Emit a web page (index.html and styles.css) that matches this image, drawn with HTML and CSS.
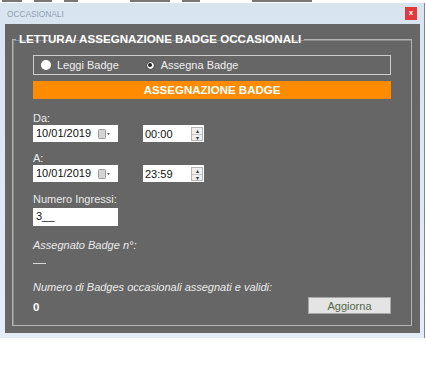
FILE: index.html
```html
<!DOCTYPE html>
<html lang="it">
<head>
    <meta charset="UTF-8">
    <meta name="viewport" content="width=device-width, initial-scale=1.0">
    <title>Occasionali</title>
    <link rel="stylesheet" href="styles.css">
</head>
<body>
    <!-- bordo della finestra sottostante -->
    <div class="topstrip">
        <span class="frag w20"></span>
        <span class="frag w18"></span>
        <span class="frag w14"></span>
        <span class="frag w40 gap"></span>
        <span class="frag w18"></span>
        <span class="frag w60 gap"></span>
    </div>

    <div class="window">
        <!-- barra del titolo -->
        <div class="titlebar">
            <span class="title">OCCASIONALI</span>
            <span class="close">x</span>
        </div>

        <div class="client">
            <fieldset class="group">
                <legend>LETTURA/ ASSEGNAZIONE BADGE OCCASIONALI</legend>

                <div class="radio-box">
                    <label class="radio"><span class="dot"></span>Leggi Badge</label>
                    <label class="radio second checked"><span class="dot"></span>Assegna Badge</label>
                </div>

                <div class="banner">ASSEGNAZIONE BADGE</div>

                <div class="label first">Da:</div>
                <div class="row">
                    <div class="date">
                        <span>10/01/2019</span>
                        <svg class="cal" width="13" height="10" viewBox="0 0 13 10">
                            <rect x="0.5" y="0.5" width="7" height="9" rx="1" fill="#d4d4d4" stroke="#9a9a9a"/>
                            <path d="M9 4 L12 4 L10.5 6 Z" fill="#555"/>
                        </svg>
                    </div>
                    <div class="time">
                        <span>00:00</span>
                        <span class="spin"><span>&#9652;</span><span>&#9662;</span></span>
                    </div>
                </div>

                <div class="label">A:</div>
                <div class="row">
                    <div class="date">
                        <span>10/01/2019</span>
                        <svg class="cal" width="13" height="10" viewBox="0 0 13 10">
                            <rect x="0.5" y="0.5" width="7" height="9" rx="1" fill="#d4d4d4" stroke="#9a9a9a"/>
                            <path d="M9 4 L12 4 L10.5 6 Z" fill="#555"/>
                        </svg>
                    </div>
                    <div class="time">
                        <span>23:59</span>
                        <span class="spin"><span>&#9652;</span><span>&#9662;</span></span>
                    </div>
                </div>

                <div class="label ingressi">Numero Ingressi:</div>
                <div class="textbox">3__</div>

                <div class="label italic assegnato">Assegnato Badge n°:</div>
                <div class="dash"></div>

                <div class="label italic validi">Numero di Badges occasionali assegnati e validi:</div>
                <div class="bottom-row">
                    <span class="count">0</span>
                    <button class="btn">Aggiorna</button>
                </div>
            </fieldset>
        </div>
    </div>
</body>
</html>
```

FILE: styles.css
```css
* {
    margin: 0;
    padding: 0;
    box-sizing: border-box;
}

body {
    font-family: "Liberation Sans", Arial, sans-serif;
    font-size: 11px;
    background-color: #fff;
    width: 426px;
    height: 385px;
    overflow: hidden;
}

.topstrip {
    height: 3px;
    display: flex;
    align-items: flex-start;
    gap: 12px;
    padding-left: 2px;
}

.frag {
    height: 2px;
    background-color: #777;
}

.frag.gap {
    margin-left: 40px;
}

.w14 { width: 14px; }
.w18 { width: 18px; }
.w20 { width: 20px; }
.w40 { width: 40px; }
.w60 { width: 60px; }

/* finestra */
.window {
    width: 425px;
    height: 335px;
    background: linear-gradient(#d9e4f1, #e3ecf7);
    border-right: 1px solid #7d8896;
}

.titlebar {
    height: 21px;
    display: flex;
    justify-content: space-between;
    align-items: center;
    padding: 0 7px 0 7px;
}

.title {
    font-size: 8.3px;
    color: #8e9eae;
}

.close {
    width: 12px;
    height: 13px;
    background-color: #e0393e;
    color: #fff;
    font-size: 8px;
    font-weight: bold;
    line-height: 12px;
    text-align: center;
}

.client {
    margin-left: 5px;
    width: 415px;
    height: 309px;
    background-color: #666;
    padding: 8px 8px 7px 7px;
}

/* groupbox */
.group {
    height: 294px;
    border: 1px solid #b4b4b4;
    box-shadow: inset 1px 1px 0 #8c8c8c;
    padding: 9px 20px 0 20px;
    color: #e8e8e8;
}

.group legend {
    margin-left: -17px;
    padding: 0 3px;
    font-size: 11.6px;
    line-height: 14px;
    font-weight: bold;
    color: #fff;
}

.radio-box {
    height: 20px;
    border: 1px solid #cdcdcd;
    display: flex;
    align-items: center;
    padding-left: 7px;
}

.radio {
    display: flex;
    align-items: center;
    color: #f0f0f0;
}

.radio.second {
    margin-left: 27px;
}

.dot {
    width: 10px;
    height: 10px;
    border-radius: 50%;
    background-color: #fff;
    margin-right: 6px;
    position: relative;
}

.radio.second .dot {
    width: 9px;
    height: 9px;
    border: 1px solid #333;
}

.radio.checked .dot::after {
    content: "";
    position: absolute;
    left: 1.5px;
    top: 1.5px;
    width: 4px;
    height: 4px;
    border-radius: 50%;
    background-color: #222;
}

.banner {
    margin-top: 6px;
    height: 18px;
    line-height: 18px;
    background-color: #ff8c00;
    color: #fff;
    font-weight: bold;
    font-size: 11.5px;
    text-align: center;
}

.label {
    line-height: 13px;
    margin-top: 10px;
    color: #ebebeb;
}

.label.first {
    margin-top: 13px;
}

.label.ingressi {
    margin-top: 11px;
    margin-bottom: 2px;
}

.label.italic {
    font-style: italic;
}

.label.assegnato {
    margin-top: 13px;
}

.label.validi {
    margin-top: 17px;
}

.row {
    display: flex;
    height: 17px;
}

.date,
.textbox {
    width: 85px;
    height: 17px;
    background-color: #fff;
    color: #111;
    padding-left: 3px;
    line-height: 17px;
}

.date {
    display: flex;
    justify-content: space-between;
    align-items: center;
    padding-right: 7px;
}

.cal {
    display: block;
}

.time {
    margin-left: 25px;
    width: 61px;
    height: 17px;
    background-color: #fff;
    color: #111;
    display: flex;
    justify-content: space-between;
    align-items: center;
    padding: 0 1px 0 2px;
}

.spin {
    width: 12px;
    height: 14px;
    border: 1px solid #b5b5b5;
    background-color: #eee;
    display: flex;
    flex-direction: column;
}

.spin span {
    flex: 1;
    font-size: 6px;
    line-height: 6px;
    text-align: center;
    color: #333;
}

.spin span + span {
    border-top: 1px solid #c8c8c8;
}

.textbox {
    height: 18px;
}

.dash {
    margin-top: 11px;
    width: 13px;
    height: 1px;
    background-color: #d8d8d8;
}

.bottom-row {
    margin-top: 3px;
    display: flex;
    justify-content: space-between;
    align-items: center;
}

.count {
    font-weight: bold;
    color: #fff;
    font-size: 11.5px;
    padding-top: 2px;
}

.btn {
    width: 83px;
    height: 17px;
    background-color: #e4e4e4;
    border: 1px solid #a8a8a8;
    color: #55664a;
    font-family: "Liberation Sans", Arial, sans-serif;
    font-size: 11px;
}
```
